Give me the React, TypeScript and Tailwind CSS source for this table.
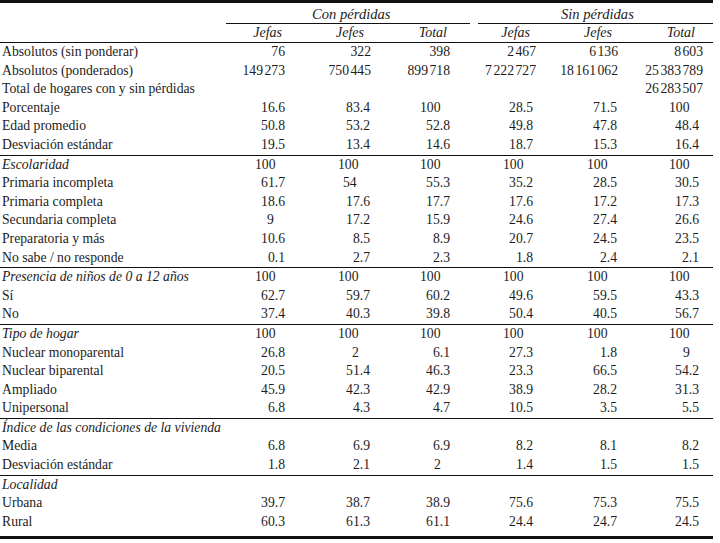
import * as React from "react";

type Val = string | { v: string; cls: string } | null;

type Row = { label: string; italic?: boolean; vals: Val[] };

// column widths: label 0-226, then six data columns ending at 713
const colW = ["w-[64px]", "w-[85px]", "w-[80px]", "w-[85px]", "w-[82px]", "w-[91px]"];
const padDec = ["pr-[5px]", "pr-[5px]", "pr-[5px]", "pr-[7px]", "pr-[5px]", "pr-[14px]"];
const padInt = ["pr-[5px]", "pr-[4px]", "pr-[5px]", "pr-[4px]", "pr-[4px]", "pr-[10px]"];
const padHundred = ["pl-[29px]", "pl-[48px]", "pl-[45px]", "pl-[48px]", "pl-[47px]", "pl-[47px]"];
const padHead = ["pr-[8px]", "pr-[11px]", "pr-[8px]", "pr-[10px]", "pr-[10px]", "pr-[18px]"];

const H = "100";
const empty: Val[] = [null, null, null, null, null, null];

const sections: Row[][] = [
  [
    { label: "Absolutos (sin ponderar)", vals: ["76", "322", "398", "2 467", "6 136", "8 603"] },
    { label: "Absolutos (ponderados)", vals: ["149 273", "750 445", "899 718", "7 222 727", "18 161 062", "25 383 789"] },
    { label: "Total de hogares con y sin pérdidas", vals: [null, null, null, null, null, "26 283 507"] },
    { label: "Porcentaje", vals: ["16.6", "83.4", H, "28.5", "71.5", H] },
    { label: "Edad promedio", vals: ["50.8", "53.2", "52.8", "49.8", "47.8", "48.4"] },
    { label: "Desviación estándar", vals: ["19.5", "13.4", "14.6", "18.7", "15.3", "16.4"] },
  ],
  [
    { label: "Escolaridad", italic: true, vals: [H, H, H, H, H, H] },
    { label: "Primaria incompleta", vals: ["61.7", { v: "54", cls: "pl-[53px]" }, "55.3", "35.2", "28.5", "30.5"] },
    { label: "Primaria completa", vals: ["18.6", "17.6", "17.7", "17.6", "17.2", "17.3"] },
    { label: "Secundaria completa", vals: [{ v: "9", cls: "pl-[41px]" }, "17.2", "15.9", "24.6", "27.4", "26.6"] },
    { label: "Preparatoria y más", vals: ["10.6", "8.5", "8.9", "20.7", "24.5", "23.5"] },
    { label: "No sabe / no responde", vals: ["0.1", "2.7", "2.3", "1.8", "2.4", "2.1"] },
  ],
  [
    { label: "Presencia de niños de 0 a 12 años", italic: true, vals: [H, H, H, H, H, H] },
    { label: "Sí", vals: ["62.7", "59.7", "60.2", "49.6", "59.5", "43.3"] },
    { label: "No", vals: ["37.4", "40.3", "39.8", "50.4", "40.5", "56.7"] },
  ],
  [
    { label: "Tipo de hogar", italic: true, vals: [H, H, H, H, H, H] },
    { label: "Nuclear monoparental", vals: ["26.8", { v: "2", cls: "pl-[62px]" }, "6.1", "27.3", "1.8", { v: "9", cls: "pl-[61px]" }] },
    { label: "Nuclear biparental", vals: ["20.5", "51.4", "46.3", "23.3", "66.5", "54.2"] },
    { label: "Ampliado", vals: ["45.9", "42.3", "42.9", "38.9", "28.2", "31.3"] },
    { label: "Unipersonal", vals: ["6.8", "4.3", "4.7", "10.5", "3.5", "5.5"] },
  ],
  [
    { label: "Índice de las condiciones de la vivienda", italic: true, vals: empty },
    { label: "Media", vals: ["6.8", "6.9", "6.9", "8.2", "8.1", "8.2"] },
    { label: "Desviación estándar", vals: ["1.8", "2.1", { v: "2", cls: "pl-[59px]" }, "1.4", "1.5", "1.5"] },
  ],
  [
    { label: "Localidad", italic: true, vals: empty },
    { label: "Urbana", vals: ["39.7", "38.7", "38.9", "75.6", "75.3", "75.5"] },
    { label: "Rural", vals: ["60.3", "61.3", "61.1", "24.4", "24.7", "24.5"] },
  ],
];

// thousands groups are set with a thin gap, as in the print
const Num = ({ text }: { text: string }) => {
  const parts = text.split(" ");
  return (
    <>
      {parts.map((p, i) => (
        <span key={i} className={i > 0 ? "ml-[1.5px]" : ""}>
          {p}
        </span>
      ))}
    </>
  );
};

const Cell = ({ val, col }: { val: Val; col: number }) => {
  if (val === null) return <div className={colW[col]} />;
  if (typeof val !== "string") {
    return (
      <div className={`${colW[col]} text-left ${val.cls}`}>
        <Num text={val.v} />
      </div>
    );
  }
  let cls = `text-right ${padInt[col]}`;
  if (val === H) cls = `text-left ${padHundred[col]}`;
  else if (val.includes(".")) cls = `text-right ${padDec[col]}`;
  return (
    <div className={`${colW[col]} ${cls}`}>
      <Num text={val} />
    </div>
  );
};

const DataRow = ({ row }: { row: Row }) => (
  <div className="flex h-[18.6px] leading-[18.6px] whitespace-nowrap">
    <div className={`w-[226px] pl-[2px] ${row.italic ? "italic" : ""}`}>{row.label}</div>
    {row.vals.map((v, i) => (
      <Cell key={i} val={v} col={i} />
    ))}
  </div>
);

export default function App() {
  const heads = ["Jefas", "Jefes", "Total", "Jefas", "Jefes", "Total"];
  return (
    <div className="w-[720px] h-[543px] bg-white overflow-hidden">
      <div
        className="w-[713px] text-[13.7px] text-[#1c1c1c]"
        style={{ fontFamily: '"Liberation Serif", "Times New Roman", serif' }}
      >
        <div className="h-[3px] bg-[#111]" />

        {/* group headers */}
        <div className="flex h-[21px] leading-[18px] italic text-[14.6px]">
          <div className="w-[226px]" />
          <div className="w-[244px] border-b border-[#111] pt-[2px] pl-[86px]">Con pérdidas</div>
          <div className="w-[8px]" />
          <div className="w-[235px] border-b border-[#111] pt-[2px] pl-[83px]">Sin pérdidas</div>
        </div>

        {/* column headers */}
        <div className="flex h-[19px] leading-[18px] italic text-[14px] border-b border-[#111]">
          <div className="w-[226px]" />
          {heads.map((h, i) => (
            <div key={i} className={`${colW[i]} text-right ${padHead[i]}`}>
              {h}
            </div>
          ))}
        </div>

        {sections.map((sec, si) => (
          <div
            key={si}
            className={
              si < sections.length - 1
                ? "border-b border-[#111]"
                : "border-b-[3px] border-[#111] pb-[5px]"
            }
          >
            {sec.map((r, ri) => (
              <DataRow key={ri} row={r} />
            ))}
          </div>
        ))}
      </div>
    </div>
  );
}
